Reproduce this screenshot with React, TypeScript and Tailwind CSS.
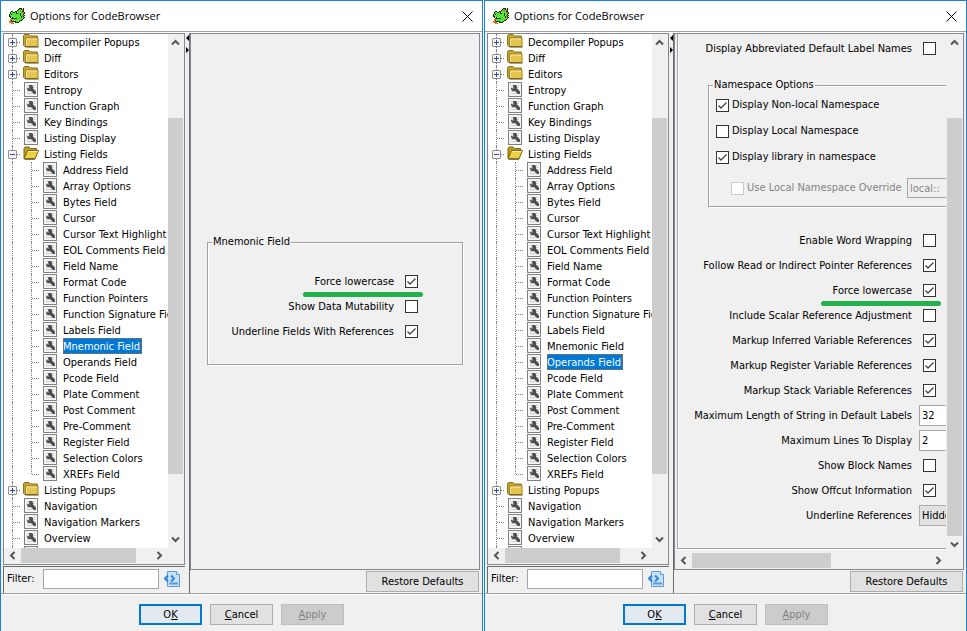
import { useId, type ReactNode } from "react";

type IconKind = "closed" | "open" | "leaf";
type Item = { name: string; kind: IconKind; children?: string[] };

const TREE: Item[] = [
  { name: "Decompiler Popups", kind: "closed" },
  { name: "Diff", kind: "closed" },
  { name: "Editors", kind: "closed" },
  { name: "Entropy", kind: "leaf" },
  { name: "Function Graph", kind: "leaf" },
  { name: "Key Bindings", kind: "leaf" },
  { name: "Listing Display", kind: "leaf" },
  {
    name: "Listing Fields",
    kind: "open",
    children: [
      "Address Field", "Array Options", "Bytes Field", "Cursor", "Cursor Text Highlight",
      "EOL Comments Field", "Field Name", "Format Code", "Function Pointers",
      "Function Signature Field", "Labels Field", "Mnemonic Field", "Operands Field",
      "Pcode Field", "Plate Comment", "Post Comment", "Pre-Comment", "Register Field",
      "Selection Colors", "XREFs Field",
    ],
  },
  { name: "Listing Popups", kind: "closed" },
  { name: "Navigation", kind: "leaf" },
  { name: "Navigation Markers", kind: "leaf" },
  { name: "Overview", kind: "leaf" },
  { name: "", kind: "leaf" },
];

const DRAGON = [
  "..........kkk.k.",
  ".........kyykyk.",
  "........kygggyk.",
  "..kk..kkgggygkk.",
  ".kggkkgkwggggyyk",
  ".kgggggkkggkggyk",
  "kgkggggggggkggk.",
  "kggggggggggkgyyk",
  "kkggggggggggkgk.",
  ".kwkgwggggggkgyk",
  "..kkkkkkggggggk.",
  ".oggggggggggyk..",
  ".okggggggggkk...",
  "oorkkkkgggk.....",
  "ooro..kkkk......",
  "..oor...........",
];
const DRAGON_COLORS: Record<string, string> = {
  k: "#12330c", g: "#55e436", w: "#ffffff", y: "#97801c", o: "#f47a1f", r: "#d8401a",
};

function DragonIcon() {
  return (
    <svg width="16" height="16" viewBox="0 0 16 16" shapeRendering="crispEdges" aria-hidden="true">
      {DRAGON.flatMap((row, y) =>
        [...row].map((c, x) =>
          c === "." ? null : <rect key={`${x}-${y}`} x={x} y={y} width="1" height="1" fill={DRAGON_COLORS[c]} />
        )
      )}
    </svg>
  );
}

function NodeIcon({ kind }: { kind: IconKind }) {
  if (kind === "leaf") {
    return (
      <svg className="shrink-0" width="16" height="16" viewBox="0 0 16 16" aria-hidden="true">
        <rect x="1.5" y="0.5" width="13" height="14" fill="#f4f4f4" stroke="#808080" />
        <path d="M4 3.500h8M4 5.500h8M4 7.500h8M4 9.500h8M4 11.500h8" stroke="#cfcfcf" />
        <path d="M6 3h3l1 1.500v2l3 3v2.500h-2l-3-3H5.500L4 7.500V6l2.500.5z" fill="#4f4f4f" />
      </svg>
    );
  }
  if (kind === "open") {
    return (
      <svg className="shrink-0" width="16" height="16" viewBox="0 0 16 16" aria-hidden="true">
        <path d="M1 12.500V2.500l1-1.500h4l1.500 1.500h6v3" fill="#c49c1c" stroke="#7d6414" />
        <path d="M1 13 4.500 4.500h11L12 13z" fill="#ecd044" stroke="#7d6414" />
        <path d="M5 5.500h9.500" stroke="#fbf3b4" />
        <path d="M2 13h10" stroke="#4f3f0c" />
      </svg>
    );
  }
  return (
    <svg className="shrink-0" width="16" height="16" viewBox="0 0 16 16" aria-hidden="true">
      <path d="M.5 11V2l1-1.500h4.500l1.500 1.500h7v10" fill="#c9a431" stroke="#8f731d" />
      <path d="M2.500 12.500v-8.500h12.500v8.500z" fill="#e3c650" stroke="#9c7f26" />
      <path d="M3.500 11.500v-6.500h10.500" stroke="#f8eba0" fill="none" />
      <path d="M.5 11l2 2h13" stroke="#5f4a10" fill="none" />
    </svg>
  );
}

function Expander({ open }: { open: boolean }) {
  return (
    <button
      type="button"
      aria-label={open ? "Collapse" : "Expand"}
      className="absolute top-1 -left-1 size-[9px] rounded-[1px] border border-[#919191] bg-[#f4f4f4]"
    >
      <svg className="block" width="7" height="7" viewBox="0 0 7 7" aria-hidden="true">
        <path d={open ? "M1 3.500h5" : "M1 3.500h5M3.500 1v5"} stroke="#2b4bab" />
      </svg>
    </button>
  );
}

function Branch({ last, children }: { last?: boolean; children?: ReactNode }) {
  return (
    <span className="relative ml-2 flex h-4 w-[11px] shrink-0">
      <span className={`w-0 border-l border-dotted border-[#808080] ${last ? "h-2" : "h-4"}`} />
      <span className="h-[9px] w-[7px] border-b border-dotted border-[#808080]" />
      {children}
    </span>
  );
}

function NodeLabel({ name, selected }: { name: string; selected?: boolean }) {
  return (
    <span
      className={
        selected
          ? "ml-[5px] bg-[#0078d7] pt-0.5 pr-0.5 leading-[14px] whitespace-nowrap text-white outline outline-dotted -outline-offset-1 outline-[#c26a1c]"
          : "ml-[5px] pt-0.5 pr-0.5 leading-[14px] whitespace-nowrap"
      }
    >
      {name}
    </span>
  );
}

function Tree({ selected }: { selected: string }) {
  return (
    <ul className="min-h-0 flex-1 overflow-hidden bg-white">
      {TREE.map((item) => (
        <li key={item.name}>
          <div className="flex h-4">
            <Branch>{item.kind !== "leaf" && <Expander open={item.kind === "open"} />}</Branch>
            <NodeIcon kind={item.kind} />
            <NodeLabel name={item.name} />
          </div>
          {item.children && (
            <ul>
              {item.children.map((child, i) => (
                <li key={child} className="flex h-4">
                  <span className="ml-2 w-[11px] shrink-0 border-l border-dotted border-[#808080]" />
                  <Branch last={i === item.children!.length - 1} />
                  <NodeIcon kind="leaf" />
                  <NodeLabel name={child} selected={child === selected} />
                </li>
              ))}
            </ul>
          )}
        </li>
      ))}
    </ul>
  );
}

const CHEVRONS = {
  up: "M1 6.500 4.500 3 8 6.500",
  down: "M1 2.500 4.500 6 8 2.500",
  left: "M6.500 1 3 4.500 6.500 8",
  right: "M2.500 1 6 4.500 2.500 8",
};

function ArrowButton({ dir }: { dir: keyof typeof CHEVRONS }) {
  return (
    <button
      type="button"
      aria-label={`Scroll ${dir}`}
      className={
        dir === "up" || dir === "down"
          ? "flex h-[17px] w-[15px] shrink-0 items-center justify-center"
          : "flex h-[15px] w-[17px] shrink-0 items-center justify-center"
      }
    >
      <svg width="9" height="9" viewBox="0 0 9 9" aria-hidden="true">
        <path d={CHEVRONS[dir]} fill="none" stroke="#555" strokeWidth="2" />
      </svg>
    </button>
  );
}

function VBar({ thumb, after }: { thumb: string; after?: string }) {
  return (
    <div className="flex w-4 shrink-0 flex-col bg-[#f0f0f0]">
      <ArrowButton dir="up" />
      <div className="flex-[67]" />
      <div className={`w-[15px] bg-[#cdcdcd] ${thumb}`} />
      {after && <div className={after} />}
      <ArrowButton dir="down" />
    </div>
  );
}

function HBar({ thumb, after }: { thumb: string; after: string }) {
  return (
    <div className="mr-4 flex h-4 shrink-0 overflow-hidden bg-[#f0f0f0]">
      <ArrowButton dir="left" />
      <div className={`h-[15px] bg-[#cdcdcd] ${thumb}`} />
      <div className={after} />
      <ArrowButton dir="right" />
    </div>
  );
}

function CheckBox({ id, checked, disabled }: { id: string; checked?: boolean; disabled?: boolean }) {
  return (
    <span className="grid size-[13px] shrink-0">
      <input
        id={id}
        type="checkbox"
        defaultChecked={checked}
        disabled={disabled}
        className="peer col-start-1 row-start-1 size-[13px] appearance-none border border-[#333] bg-white disabled:border-[#ccc]"
      />
      <svg
        className="pointer-events-none col-start-1 row-start-1 hidden peer-checked:block"
        width="13" height="13" viewBox="0 0 13 13" aria-hidden="true"
      >
        <path d="M2.500 6.500 5 9 10.500 3.500" fill="none" stroke="#444" strokeWidth="1.400" />
      </svg>
    </span>
  );
}

type OptionProps = {
  label: string;
  labelWidth: string;
  checked?: boolean;
  text?: string;
  choice?: string;
  marked?: boolean;
};

function Option({ label, labelWidth, checked, text, choice, marked }: OptionProps) {
  const id = useId();
  return (
    <div className="flex h-[25px] items-center">
      <label htmlFor={id} className={`shrink-0 text-right leading-4 whitespace-nowrap ${labelWidth}`}>
        <span className="relative inline-block">
          {label}
          {marked && <span className="absolute top-[18px] -right-[29px] -left-3 h-[5px] rounded-sm bg-[#22b14c]" />}
        </span>
      </label>
      {text !== undefined ? (
        <input
          id={id}
          type="text"
          defaultValue={text}
          className="ml-[7px] h-[21px] w-24 shrink-0 border border-[#a5a5ab] bg-white px-0.5"
        />
      ) : choice !== undefined ? (
        <select
          id={id}
          defaultValue={choice}
          className="ml-[7px] h-[21px] w-24 shrink-0 appearance-none border border-[#adadad] bg-[#e1e1e1] px-0.5"
        >
          <option>{choice}</option>
        </select>
      ) : (
        <span className="ml-[11px] flex">
          <CheckBox id={id} checked={checked} />
        </span>
      )}
    </div>
  );
}

function NamespaceOption({ label, checked }: { label: string; checked?: boolean }) {
  const id = useId();
  return (
    <div className="flex h-[26px] items-center gap-[3px] pl-[7px]">
      <CheckBox id={id} checked={checked} />
      <label htmlFor={id}>{label}</label>
    </div>
  );
}

function Group({ title, className, children }: { title: string; className: string; children: ReactNode }) {
  return (
    <fieldset
      className={`border border-[#a0a0a0] shadow-[1px_1px_0_#fff,inset_1px_1px_0_#fff] ${className}`}
    >
      <legend className="ml-1 bg-[#f0f0f0] px-px leading-[14px]">{title}</legend>
      {children}
    </fieldset>
  );
}

function MnemonicOptions() {
  return (
    <div className="flex min-h-0 flex-1 items-center border border-[#828790] px-4 pb-[3px]">
      <Group title="Mnemonic Field" className="w-full py-5">
        <Option labelWidth="w-[186px]" label="Force lowercase" checked marked />
        <Option labelWidth="w-[186px]" label="Show Data Mutability" />
        <Option labelWidth="w-[186px]" label="Underline Fields With References" checked />
      </Group>
    </div>
  );
}

const OPERAND_OPTIONS: Omit<OptionProps, "labelWidth">[] = [
  { label: "Enable Word Wrapping" },
  { label: "Follow Read or Indirect Pointer References", checked: true },
  { label: "Force lowercase", checked: true, marked: true },
  { label: "Include Scalar Reference Adjustment" },
  { label: "Markup Inferred Variable References", checked: true },
  { label: "Markup Register Variable References", checked: true },
  { label: "Markup Stack Variable References", checked: true },
  { label: "Maximum Length of String in Default Labels", text: "32" },
  { label: "Maximum Lines To Display", text: "2" },
  { label: "Show Block Names" },
  { label: "Show Offcut Information", checked: true },
  { label: "Underline References", choice: "Hidden" },
];

function OperandOptions() {
  const overrideId = useId();
  return (
    <div className="flex min-h-0 flex-1 flex-col border border-[#828790]">
      <div className="flex min-h-0 flex-1">
        <div className="mr-px min-w-0 flex-1 overflow-hidden pl-0.5">
          <div className="w-[420px] border-b border-l border-[#a0a0a0] pt-0.5 pb-5 shadow-[0_1px_0_#fff,inset_1px_0_0_#fff]">
            <Option labelWidth="w-[234px]" label="Display Abbreviated Default Label Names" />
            <Group title="Namespace Options" className="mt-[17px] mb-[21px] ml-[30px]">
              <NamespaceOption label="Display Non-local Namespace" checked />
              <NamespaceOption label="Display Local Namespace" />
              <NamespaceOption label="Display library in namespace" checked />
              <div className="flex h-9 items-center gap-[3px] pl-[22px] text-[#838383]">
                <CheckBox id={overrideId} disabled />
                <label htmlFor={overrideId} className="w-[157px] shrink-0 whitespace-nowrap">
                  Use Local Namespace Override
                </label>
                <input
                  type="text"
                  disabled
                  aria-label="Local namespace"
                  defaultValue="local::"
                  className="h-5 w-32 border border-[#a5a5ab] px-0.5"
                />
              </div>
            </Group>
            {OPERAND_OPTIONS.map((o) => (
              <Option key={o.label} labelWidth="w-[234px]" {...o} />
            ))}
          </div>
        </div>
        <VBar thumb="flex-[417]" />
      </div>
      <HBar thumb="flex-[139]" after="flex-[99]" />
    </div>
  );
}

function DialogWindow({ selected, children }: { selected: string; children: ReactNode }) {
  const filterId = useId();
  return (
    <section className="flex min-w-0 flex-1 flex-col border border-b-0 border-[#1883d7] bg-[#f0f0f0]">
      <header className="flex h-[31px] shrink-0 items-center border-b border-[#a0a0a0] bg-white pr-[9px] pl-2">
        <DragonIcon />
        <h1 className="ml-[5px] flex-1 font-['Open_Sans',sans-serif] text-[11px]">Options for CodeBrowser</h1>
        <button type="button" aria-label="Close">
          <svg className="block" width="11" height="11" viewBox="0 0 11 11" aria-hidden="true">
            <path d="M.5.5l10 10M10.500.5l-10 10" stroke="#000" />
          </svg>
        </button>
      </header>

      <main className="flex min-h-0 flex-1 border-t border-b border-t-white border-b-[#a0a0a0] pr-px pl-0.5">
        <div className="flex w-[182px] shrink-0 flex-col">
          <div className="flex min-h-0 flex-1 flex-col border border-[#828790]">
            <div className="flex min-h-0 flex-1">
              <Tree selected={selected} />
              <VBar thumb="flex-[356]" after="flex-[57]" />
            </div>
            <HBar thumb="flex-[115]" after="flex-[15]" />
          </div>
          <div className="mt-px flex h-[27px] shrink-0 items-center border-t border-l border-[#696969] pr-[5px] pb-0.5 pl-[3px]">
            <label htmlFor={filterId} className="w-9 shrink-0">Filter:</label>
            <input
              id={filterId}
              type="text"
              className="h-5 min-w-0 flex-1 border border-[#a5a5ab] bg-white px-0.5"
            />
            <button type="button" aria-label="Filter options" className="ml-[5px]">
              <svg className="block" width="16" height="16" viewBox="0 0 16 16" aria-hidden="true">
                <path d="M3.500.5h9l3 3v12h-12z" fill="#c5e2fa" stroke="#5b9bd8" />
                <path d="M12.500.5v3h3" fill="#fff" stroke="#5b9bd8" />
                <path d="M5 12.500h9" stroke="#5b9bd8" strokeWidth="2" />
                <path d="M4 4.500 1 7.500l3 3M7 4.500l3 3-3 3" fill="none" stroke="#2f86de" strokeWidth="2" />
              </svg>
            </button>
          </div>
        </div>

        <div className="w-1 shrink-0 pt-0.5">
          <svg className="ml-px block" width="3" height="18" viewBox="0 0 3 18" aria-hidden="true">
            <path d="M3 0v6L0 3zM0 12v6l3-3z" fill="#000" />
          </svg>
        </div>

        <div className="flex min-w-0 flex-1 flex-col border-l border-[#696969] pr-px">
          {children}
          <div className="flex h-[23px] shrink-0 justify-end pt-px pr-px">
            <button type="button" className="h-[21px] w-[113px] border border-[#adadad] bg-[#e1e1e1]">
              Restore Defaults
            </button>
          </div>
        </div>
      </main>

      <footer className="flex h-[37px] shrink-0 justify-center gap-2 border-t border-white pt-[9px]">
        <button type="button" className="h-[21px] w-[63px] border-2 border-[#0078d7] bg-[#e3e9f1]">
          O<u>K</u>
        </button>
        <button type="button" className="h-[21px] w-[63px] border border-[#adadad] bg-[#e1e1e1]">
          <u>C</u>ancel
        </button>
        <button type="button" disabled className="h-[21px] w-[63px] border border-[#bfbfbf] bg-[#ccc] text-[#838383]">
          <u>A</u>pply
        </button>
      </footer>
    </section>
  );
}

export default function App() {
  return (
    <div className="flex h-screen gap-px bg-white font-['DejaVu_Sans_Condensed','DejaVu_Sans',sans-serif] text-[11px] leading-4 text-black">
      <DialogWindow selected="Mnemonic Field">
        <MnemonicOptions />
      </DialogWindow>
      <DialogWindow selected="Operands Field">
        <OperandOptions />
      </DialogWindow>
    </div>
  );
}
